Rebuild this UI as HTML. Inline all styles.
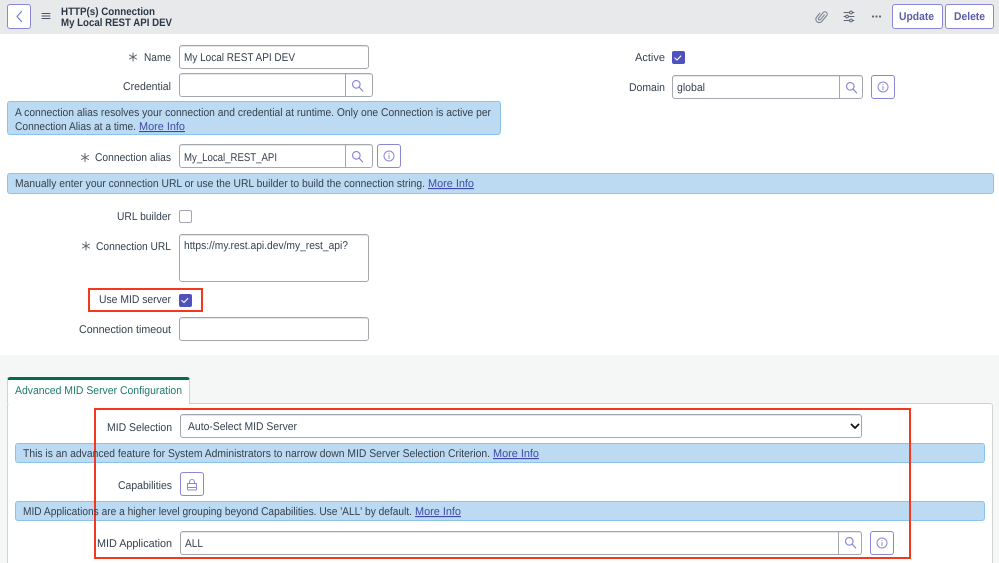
<!DOCTYPE html>
<html><head><meta charset="utf-8"><style>
html,body{margin:0;padding:0;width:999px;height:563px;overflow:hidden;background:#fff}
div{position:absolute;box-sizing:border-box}
#p{left:0;top:0;width:999px;height:563px;overflow:hidden;filter:blur(.3px)}
.in{border:1px solid #a4a8ae;border-radius:3px;background:#fff;box-shadow:inset 0 1px 0 #e4e5e7}
.al{background:#bcdbf2;border:1px solid #8cc3ec;border-radius:3px}
.bt{border:1px solid #8a87d6;border-radius:3px;background:#fff}
.cb{width:13px;height:13px;background:#4f52bd;border-radius:2px}
.ub{width:13px;height:13px;border:1px solid #a4a8ae;border-radius:2px;background:#fff}
.rd{border:2px solid #f4371f}
svg{position:absolute;left:0;top:0}
text{font-family:"Liberation Sans",sans-serif;font-size:11.2px;fill:#35414e;text-rendering:geometricPrecision}
.l{fill:#3f4aa8;text-decoration:underline}
.h{font-weight:bold;font-size:10.8px;fill:#2b3647}
.b{font-weight:bold;font-size:11.2px;fill:#5a5ea8}
</style></head><body>
<div id="p">
<div style="left:0;top:0;width:999px;height:34px;background:#e8e9eb"></div>
<div style="left:0;top:355px;width:999px;height:208px;background:#f5f6f6"></div>
<div style="left:7px;top:403px;width:986px;height:170px;background:#fff;border:1px solid #cfd1d4;border-radius:3px"></div>
<div style="left:7px;top:377px;width:183px;height:27px;background:#fff;border:1px solid #cfd1d4;border-top:3px solid #046b4f;border-bottom:none;border-radius:3px 3px 0 0"></div>

<div class="bt" style="left:7px;top:4px;width:24px;height:25px"></div>
<div class="bt" style="left:892px;top:4px;width:51px;height:25px"></div>
<div class="bt" style="left:945px;top:4px;width:49px;height:25px"></div>

<div class="in" style="left:179px;top:45px;width:190px;height:24px"></div>
<div class="in" style="left:179px;top:73px;width:194px;height:24px"></div>
<div style="left:345px;top:73px;width:1px;height:24px;background:#a4a8ae"></div>
<div class="al" style="left:7px;top:101px;width:494px;height:34px"></div>
<div class="in" style="left:179px;top:144px;width:194px;height:24px"></div>
<div style="left:345px;top:144px;width:1px;height:24px;background:#a4a8ae"></div>
<div class="bt" style="left:377px;top:144px;width:24px;height:24px"></div>
<div class="al" style="left:7px;top:173px;width:987px;height:21px"></div>
<div class="ub" style="left:179px;top:210px"></div>
<div class="in" style="left:179px;top:234px;width:190px;height:48px"></div>
<div class="cb" style="left:179px;top:294px"></div>
<div class="in" style="left:179px;top:317px;width:190px;height:24px"></div>

<div class="cb" style="left:672px;top:51px"></div>
<div class="in" style="left:672px;top:75px;width:191px;height:24px"></div>
<div style="left:839px;top:75px;width:1px;height:24px;background:#a4a8ae"></div>
<div class="bt" style="left:871px;top:75px;width:24px;height:24px"></div>

<div class="in" style="left:180px;top:414px;width:682px;height:24px"></div>
<div class="al" style="left:15px;top:443px;width:970px;height:20px"></div>
<div class="bt" style="left:180px;top:472px;width:24px;height:24px"></div>
<div class="al" style="left:15px;top:501px;width:970px;height:20px"></div>
<div class="in" style="left:180px;top:531px;width:682px;height:24px"></div>
<div style="left:838px;top:531px;width:1px;height:24px;background:#a4a8ae"></div>
<div class="bt" style="left:870px;top:531px;width:24px;height:24px"></div>

<div class="rd" style="left:88px;top:288px;width:115px;height:24px"></div>
<div class="rd" style="left:94px;top:408px;width:817px;height:151px"></div>

<svg width="999" height="563" viewBox="0 0 999 563">
<g fill="none" stroke-linecap="round" stroke-linejoin="round">
<path d="M21.5 11.5l-4.5 5 4.5 5" stroke="#7f7cd0" stroke-width="1.2"/>
<path d="M42 13.5h8M42 16h8M42 18.500h8" stroke="#4a5463" stroke-width="1"/>
<path d="M1.200 -3v6a1.200 1.200 0 0 1-2.400 0v-7a2.300 2.300 0 0 1 4.600 0v7.500a3.400 3.400 0 0 1-6.800 0v-5" stroke="#7d8592" stroke-width="1.100" transform="translate(821.500 16.500) rotate(40)"/>
<path d="M844 12.500h10M844 16.500h10M844 20.500h10" stroke="#5c6675" stroke-width="1"/>
<circle cx="851" cy="12.500" r="1.400" stroke="#5c6675" fill="#e8e9eb"/><circle cx="847" cy="16.500" r="1.400" stroke="#5c6675" fill="#e8e9eb"/><circle cx="851" cy="20.500" r="1.400" stroke="#5c6675" fill="#e8e9eb"/>
<g stroke="#8a87d6" stroke-width="1.200">
<g transform="translate(352 80)"><circle cx="4.300" cy="4.300" r="3.800"/><path d="M7.200 7.200l3.500 3.800"/></g>
<g transform="translate(352 151)"><circle cx="4.300" cy="4.300" r="3.800"/><path d="M7.200 7.200l3.500 3.800"/></g>
<g transform="translate(846 82)"><circle cx="4.300" cy="4.300" r="3.800"/><path d="M7.200 7.200l3.500 3.800"/></g>
<g transform="translate(845 537)"><circle cx="4.300" cy="4.300" r="3.800"/><path d="M7.200 7.200l3.500 3.800"/></g>
</g>
<g stroke="#8a87d6" stroke-width="1">
<g transform="translate(389 156)"><circle r="5"/><path d="M0 -.5v3M0 -2.500v.3"/></g>
<g transform="translate(883 87)"><circle r="5"/><path d="M0 -.5v3M0 -2.500v.3"/></g>
<g transform="translate(882 543)"><circle r="5"/><path d="M0 -.5v3M0 -2.500v.3"/></g>
</g>
<path d="M187.500 483.500h9v5.800a.7.7 0 0 1-.7.700h-7.600a.7.7 0 0 1-.7-.700zM189.500 483.500v-1.500a2.500 2.500 0 0 1 5 0v1.500M187.500 487.500h9" stroke="#8a87d6" stroke-width="1"/>
<path d="M674.800 58l2.200 2 3.800-4" stroke="#fff" stroke-width="1.100"/>
<path d="M181.800 300.500l2.200 2 3.800-4" stroke="#fff" stroke-width="1.100"/>
<path d="M851.500 424.500l3.500 3.500 3.500-3.500" stroke="#111" stroke-width="1.800"/>
<g stroke="#59626f" stroke-width="1">
<path d="M133 53v8M129.500 55l7 4M136.500 55l-7 4"/>
<path d="M85 153.500v8M81.500 155.500l7 4M88.500 155.500l-7 4"/>
<path d="M86 242v8M82.500 244l7 4M89.500 244l-7 4"/>
</g>
<g fill="#5c6675"><circle cx="873" cy="16.500" r="1.100"/><circle cx="876.500" cy="16.500" r="1.100"/><circle cx="880" cy="16.500" r="1.100"/></g>
</g>

<text class="h" x="61" y="15" textLength="94" lengthAdjust="spacingAndGlyphs">HTTP(s) Connection</text>
<text class="h" x="61" y="26" textLength="111" lengthAdjust="spacingAndGlyphs">My Local REST API DEV</text>
<text class="b" x="899" y="20" textLength="35" lengthAdjust="spacingAndGlyphs">Update</text>
<text class="b" x="954" y="20" textLength="31" lengthAdjust="spacingAndGlyphs">Delete</text>

<text x="144" y="61" textLength="27" lengthAdjust="spacingAndGlyphs">Name</text>
<text x="184" y="61" textLength="111" lengthAdjust="spacingAndGlyphs">My Local REST API DEV</text>
<text x="123" y="90" textLength="48" lengthAdjust="spacingAndGlyphs">Credential</text>
<text x="15" y="116" textLength="476" lengthAdjust="spacingAndGlyphs">A connection alias resolves your connection and credential at runtime. Only one Connection is active per</text>
<text x="15" y="130" textLength="121" lengthAdjust="spacingAndGlyphs">Connection Alias at a time.</text>
<text class="l" x="139" y="130" textLength="46" lengthAdjust="spacingAndGlyphs">More Info</text>
<text x="95" y="161" textLength="76" lengthAdjust="spacingAndGlyphs">Connection alias</text>
<text x="184" y="161" textLength="93" lengthAdjust="spacingAndGlyphs">My_Local_REST_API</text>
<text x="15" y="187" textLength="410" lengthAdjust="spacingAndGlyphs">Manually enter your connection URL or use the URL builder to build the connection string.</text>
<text class="l" x="428" y="187" textLength="46" lengthAdjust="spacingAndGlyphs">More Info</text>
<text x="117" y="220" textLength="54" lengthAdjust="spacingAndGlyphs">URL builder</text>
<text x="96" y="250" textLength="75" lengthAdjust="spacingAndGlyphs">Connection URL</text>
<text x="184" y="249" textLength="164" lengthAdjust="spacingAndGlyphs">https://my.rest.api.dev/my_rest_api?</text>
<text x="99" y="303" textLength="72" lengthAdjust="spacingAndGlyphs">Use MID server</text>
<text x="79" y="333" textLength="92" lengthAdjust="spacingAndGlyphs">Connection timeout</text>
<text x="635" y="61" textLength="30" lengthAdjust="spacingAndGlyphs">Active</text>
<text x="629" y="91" textLength="36" lengthAdjust="spacingAndGlyphs">Domain</text>
<text x="677" y="91" textLength="28" lengthAdjust="spacingAndGlyphs">global</text>
<text x="15" y="394" textLength="167" lengthAdjust="spacingAndGlyphs" style="fill:#1f7a6b">Advanced MID Server Configuration</text>
<text x="107" y="431" textLength="65" lengthAdjust="spacingAndGlyphs">MID Selection</text>
<text x="188" y="430" textLength="109" lengthAdjust="spacingAndGlyphs">Auto-Select MID Server</text>
<text x="23" y="457" textLength="467" lengthAdjust="spacingAndGlyphs">This is an advanced feature for System Administrators to narrow down MID Server Selection Criterion.</text>
<text class="l" x="493" y="457" textLength="46" lengthAdjust="spacingAndGlyphs">More Info</text>
<text x="118" y="489" textLength="54" lengthAdjust="spacingAndGlyphs">Capabilities</text>
<text x="23" y="515" textLength="389" lengthAdjust="spacingAndGlyphs">MID Applications are a higher level grouping beyond Capabilities. Use 'ALL' by default.</text>
<text class="l" x="415" y="515" textLength="46" lengthAdjust="spacingAndGlyphs">More Info</text>
<text x="97" y="547" textLength="75" lengthAdjust="spacingAndGlyphs">MID Application</text>
<text x="185" y="547" textLength="18" lengthAdjust="spacingAndGlyphs">ALL</text>
</svg>
</div>
</body></html>
